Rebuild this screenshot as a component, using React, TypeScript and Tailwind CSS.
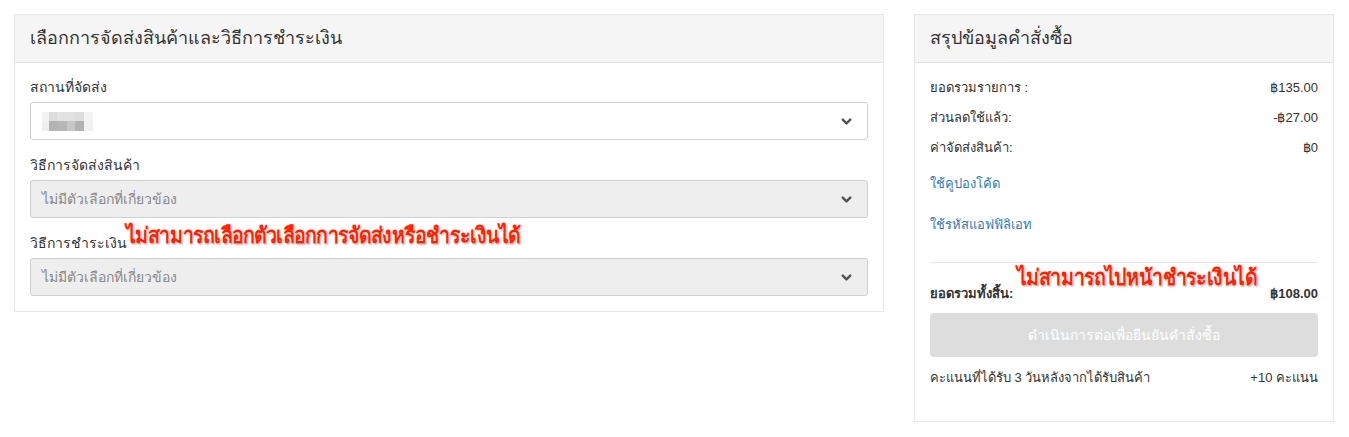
import { ChevronDown } from "lucide-react";

const font = "font-['Liberation_Sans','Noto_Sans',sans-serif]";
const note =
  "absolute origin-left scale-x-[0.89] whitespace-nowrap font-bold text-[22px] leading-none text-[#ff2200] tracking-[-0.5px] [text-shadow:0_0_1px_#fff,0_0_2px_#fff,1px_1px_2px_rgba(0,0,0,0.45)]";

// blurred address placeholder, two rows of pixel blocks
const addrTop = ["#f2f2f2", "#dcdcdc", "#e2e2e2", "#e2e2e2", "#dddddd", "#f4f4f4"];
const addrBottom = ["#efefef", "#b4b4b4", "#b6b6b6", "#c6c6c6", "#b2b2b2", "#f1f1f1"];
const addrW = [7, 8, 10, 8, 9, 9];

function BlurredAddress() {
  return (
    <div className="flex flex-col">
      {[addrTop, addrBottom].map((row, r) => (
        <div key={r} className="flex">
          {row.map((c, i) => (
            <div key={i} style={{ background: c, width: addrW[i], height: r === 0 ? 9 : 10 }} />
          ))}
        </div>
      ))}
    </div>
  );
}

function Select({ disabled, children }: { disabled?: boolean; children: React.ReactNode }) {
  return (
    <div
      className={`flex items-center justify-between h-[38px] pl-[11px] pr-[13px] border border-[#cfcfcf] rounded-[3px] ${
        disabled ? "bg-[#eeeeee] text-[#888] text-[14px]" : "bg-white"
      }`}
    >
      <div>{children}</div>
      <ChevronDown className="w-[15px] h-[15px] text-[#555]" strokeWidth={4} />
    </div>
  );
}

function Panel({ title, className, children }: { title: string; className: string; children: React.ReactNode }) {
  return (
    <div className={`border border-[#e7e7e7] bg-white ${className}`}>
      <div className="h-[48px] flex items-center px-[15px] bg-[#f5f5f5] border-b border-[#e3e3e3] text-[18px] text-[#333]">
        {title}
      </div>
      {children}
    </div>
  );
}

export default function App() {
  return (
    <div className={`${font} bg-white w-[1349px] h-[437px] pt-[14px] pl-[14px] flex items-start gap-[30px] text-[#333]`}>
      {/* shipping & payment */}
      <Panel title="เลือกการจัดส่งสินค้าและวิธีการชำระเงิน" className="w-[870px] h-[298px]">
        <div className="px-[15px] pt-[15px] flex flex-col text-[14px]">
          <div className="h-[24px] leading-[18px]">สถานที่จัดส่ง</div>
          <Select>
            <BlurredAddress />
          </Select>
          <div className="h-[24px] leading-[18px] mt-[16px]">วิธีการจัดส่งสินค้า</div>
          <Select disabled>ไม่มีตัวเลือกที่เกี่ยวข้อง</Select>
          <div className="relative h-[24px] leading-[18px] mt-[16px]">
            วิธีการชำระเงิน
            <span className={`${note} left-[96px] -top-[9px]`}>ไม่สามารถเลือกตัวเลือกการจัดส่งหรือชำระเงินได้</span>
          </div>
          <Select disabled>ไม่มีตัวเลือกที่เกี่ยวข้อง</Select>
        </div>
      </Panel>

      {/* order summary */}
      <Panel title="สรุปข้อมูลคำสั่งซื้อ" className="w-[420px] h-[408px]">
        <div className="px-[15px] pt-[10px] flex flex-col text-[13px]">
          <div className="flex justify-between h-[30px] items-center">
            <span>ยอดรวมรายการ :</span>
            <span>฿135.00</span>
          </div>
          <div className="flex justify-between h-[30px] items-center">
            <span>ส่วนลดใช้แล้ว:</span>
            <span>-฿27.00</span>
          </div>
          <div className="flex justify-between h-[30px] items-center">
            <span>ค่าจัดส่งสินค้า:</span>
            <span>฿0</span>
          </div>
          <div className="text-[#337ab7] h-[30px] flex items-center mt-[6px]">ใช้คูปองโค้ด</div>
          <div className="text-[#337ab7] h-[30px] flex items-center mt-[11px]">ใช้รหัสแอฟฟิลิเอท</div>
          <div className="relative border-t border-[#e5e5e5] mt-[22px]">
            <span className={`${note} left-[87px] top-[4px]`}>ไม่สามารถไปหน้าชำระเงินได้</span>
          </div>
          <div className="flex justify-between items-center h-[30px] mt-[16px] font-bold">
            <span>ยอดรวมทั้งสิ้น:</span>
            <span>฿108.00</span>
          </div>
          <div className="h-[44px] mt-[4px] rounded-[4px] bg-[#dddddd] text-white text-[14px] flex items-center justify-center">
            ดำเนินการต่อเพื่อยืนยันคำสั่งซื้อ
          </div>
          <div className="flex justify-between items-center h-[30px] mt-[6px]">
            <span>คะแนนที่ได้รับ 3 วันหลังจากได้รับสินค้า</span>
            <span>+10 คะแนน</span>
          </div>
        </div>
      </Panel>
    </div>
  );
}
